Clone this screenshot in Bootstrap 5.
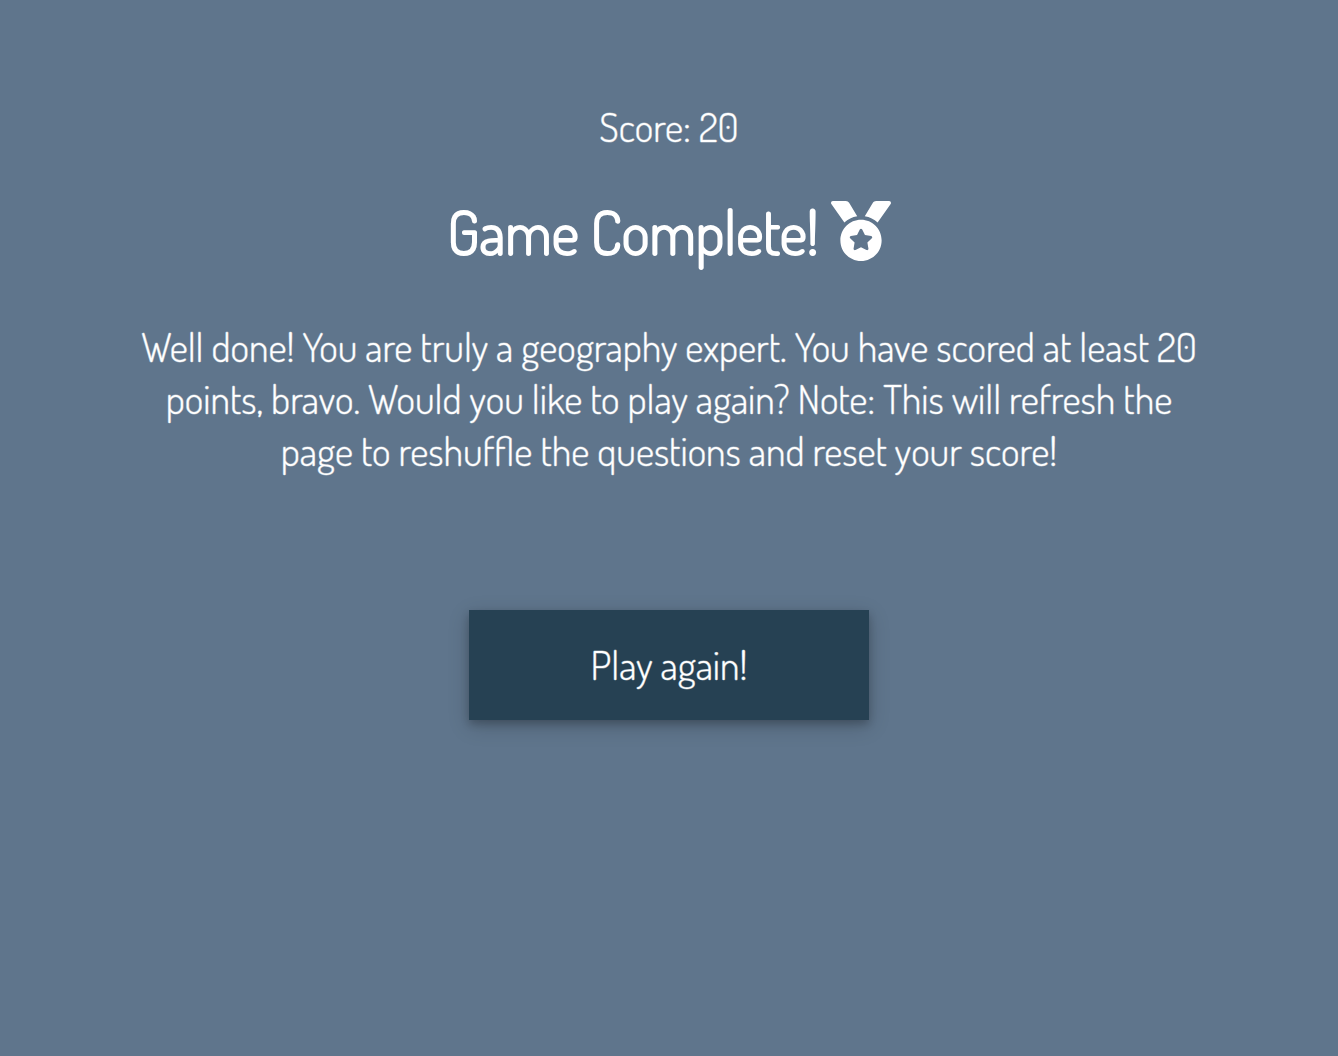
<!DOCTYPE html>
<html lang="en">
<head>
<meta charset="utf-8">
<meta name="viewport" content="width=device-width, initial-scale=1">
<title>Game Complete!</title>
<link href="https://cdn.jsdelivr.net/npm/bootstrap@5.3.0/dist/css/bootstrap.min.css" rel="stylesheet">
<style>
  body {
    background: #5f758c;
    color: #fff;
    font-family: "Dosis", "Liberation Sans Narrow", "Lato", sans-serif;
    font-size: 40px;
    font-weight: 300;
    line-height: 52px;
    -webkit-text-stroke: 1px rgba(255, 255, 255, .45);
  }
  .results { width: 80%; padding-top: 100px; padding-bottom: 100px; }
  .headline {
    font-size: 60px;
    font-weight: 300;
    line-height: 76px;
    gap: 12px;
    margin: 41px 0 51px;
    -webkit-text-stroke: 2px #fff;
  }
  .medal { width: 60px; height: 60px; }
  .message { margin-bottom: 134px; }
  .replay {
    width: 400px;
    max-width: 100%;
    padding: 28px 16px 30px;
    background: #264153;
    box-shadow: 0 4px 8px rgba(0, 0, 0, .2), 0 6px 20px rgba(0, 0, 0, .19);
    font-size: inherit;
    font-weight: inherit;
    line-height: inherit;
  }
  .replay:hover { background: #1d3342; }
</style>
</head>
<body>
<main class="results mx-auto d-flex flex-column align-items-center text-center">
  <p class="m-0">Score: 20</p>
  <h1 class="headline d-flex align-items-center justify-content-center">
    <span>Game Complete!</span>
    <svg class="medal flex-shrink-0" viewBox="0 0 512 512" fill="currentColor" aria-hidden="true"><path d="M223.75 130.75L154.62 15.54A31.997 31.997 0 0 0 127.18 0H16.03C3.08 0-4.5 14.57 2.92 25.18l111.27 158.96c29.72-27.77 67.52-46.83 109.56-53.39zM495.97 0H384.82c-11.24 0-21.66 5.9-27.44 15.54l-69.13 115.21c42.04 6.56 79.84 25.62 109.56 53.38L509.08 25.18C516.5 14.57 508.92 0 495.97 0zM256 160c-97.2 0-176 78.8-176 176s78.8 176 176 176 176-78.8 176-176-78.8-176-176-176zm92.52 157.26l-37.93 36.96 8.97 52.22c1.6 9.36-8.26 16.51-16.65 12.09L256 393.88l-46.9 24.65c-8.4 4.45-18.25-2.74-16.65-12.09l8.97-52.22-37.93-36.96c-6.82-6.64-3.05-18.23 6.35-19.59l52.43-7.64 23.43-47.52c2.11-4.28 6.19-6.39 10.28-6.39 4.11 0 8.22 2.14 10.33 6.39l23.43 47.52 52.43 7.64c9.4 1.36 13.17 12.95 6.35 19.59z"/></svg>
  </h1>
  <p class="message">Well done! You are truly a geography expert. You have scored at least 20 points, bravo. Would you like to play again? Note: This will refresh the page to reshuffle the questions and reset your score!</p>
  <button type="button" class="replay border-0 text-white">Play again!</button>
</main>
<script src="https://cdn.jsdelivr.net/npm/bootstrap@5.3.0/dist/js/bootstrap.bundle.min.js"></script>
</body>
</html>
